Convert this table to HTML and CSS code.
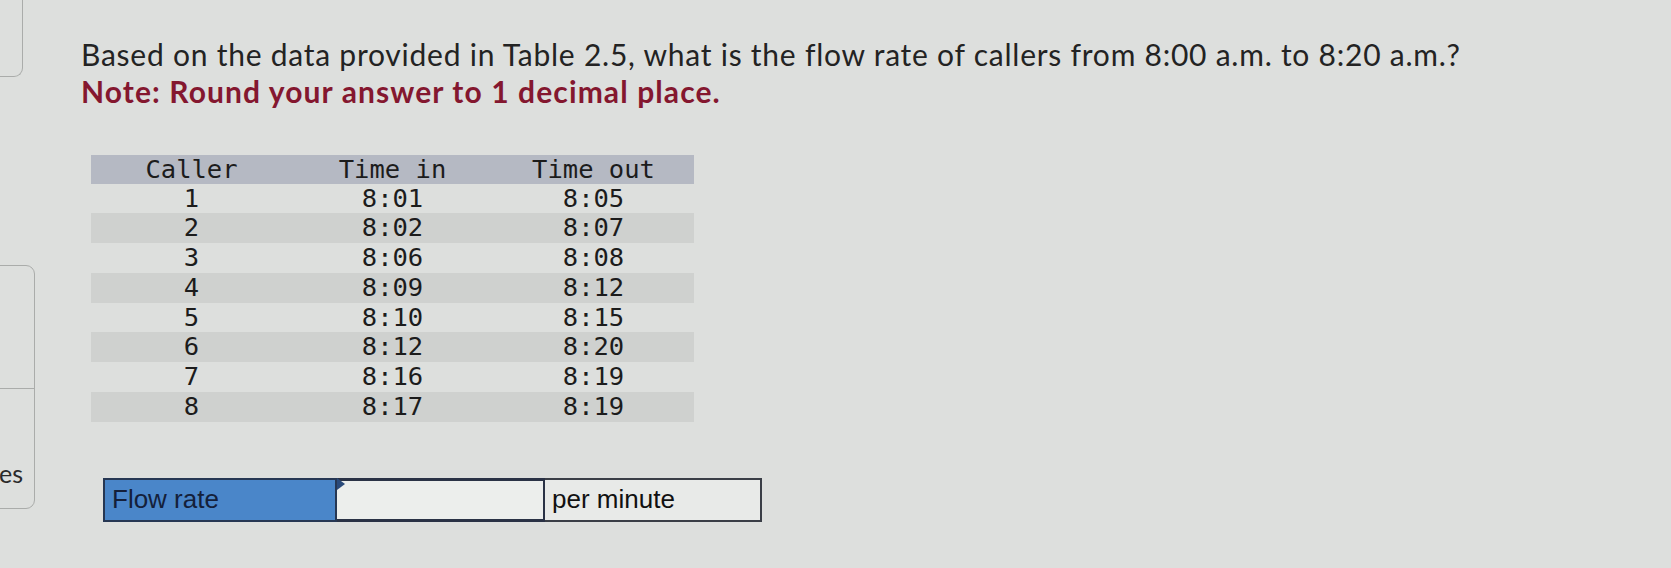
FILE: index.html
```html
<!DOCTYPE html>
<html lang="en">
<head>
<meta charset="utf-8">
<title>Flow rate question</title>
<link rel="stylesheet" href="styles.css">
</head>
<body>
<div class="page">
  <aside class="side">
    <div class="side-box top"></div>
    <div class="side-box lower">
      <div class="side-sec"></div>
      <div class="side-sec last"><span class="side-label">es</span></div>
    </div>
  </aside>
  <main class="main">
    <p class="question">Based on the data provided in Table 2.5, what is the flow rate of callers from 8:00 a.m. to 8:20 a.m.?<br><strong class="note">Note: Round your answer to 1 decimal place.</strong></p>
    <div class="data">
      <div class="row head"><span>Caller</span><span>Time in</span><span>Time out</span></div>
      <div class="row"><span>1</span><span>8:01</span><span>8:05</span></div>
      <div class="row alt"><span>2</span><span>8:02</span><span>8:07</span></div>
      <div class="row"><span>3</span><span>8:06</span><span>8:08</span></div>
      <div class="row alt"><span>4</span><span>8:09</span><span>8:12</span></div>
      <div class="row"><span>5</span><span>8:10</span><span>8:15</span></div>
      <div class="row alt"><span>6</span><span>8:12</span><span>8:20</span></div>
      <div class="row"><span>7</span><span>8:16</span><span>8:19</span></div>
      <div class="row alt"><span>8</span><span>8:17</span><span>8:19</span></div>
    </div>
    <div class="answer">
      <div class="cell label">Flow rate</div>
      <div class="cell input"><span class="marker"></span></div>
      <div class="cell unit">per minute</div>
    </div>
  </main>
</div>
</body>
</html>
```

FILE: styles.css
```css
html, body {
  margin: 0;
  padding: 0;
}
body {
  background: #dddfdd;
  width: 1671px;
  height: 568px;
  overflow: hidden;
}
.page {
  display: flex;
  align-items: flex-start;
}
.side {
  width: 36px;
  flex: none;
  display: flex;
  flex-direction: column;
}
.side-box {
  border: 1.5px solid #aaacaa;
  border-radius: 0 0 9px 0;
  margin-left: -10px;
  box-sizing: border-box;
}
.side-box.top {
  width: 33px;
  height: 77px;
  border-top: none;
}
.side-box.lower {
  width: 45px;
  height: 244px;
  margin-top: 188px;
  border-radius: 0 9px 9px 0;
  display: flex;
  flex-direction: column;
}
.side-sec {
  height: 122px;
  border-bottom: 1.5px solid #aaacaa;
}
.side-sec.last {
  flex: 1;
  border-bottom: none;
  display: flex;
  align-items: flex-end;
  padding-bottom: 22px;
  box-sizing: border-box;
}
.side-label {
  font-family: "Lato", "Open Sans", sans-serif;
  font-size: 25px;
  color: #2a2a2a;
  margin-left: 8px;
  line-height: 1;
}
.main {
  padding-left: 45px;
  padding-top: 36px;
}
.question {
  margin: 0;
  font-family: "Lato", "Open Sans", sans-serif;
  font-size: 30px;
  line-height: 37px;
  letter-spacing: 0.76px;
  color: #232323;
  white-space: nowrap;
}
.note {
  color: #84172f;
  font-weight: 700;
  letter-spacing: 1.1px;
}
.data {
  margin-top: 45px;
  margin-left: 10px;
  width: 603px;
  font-family: "DejaVu Sans Mono", "Liberation Mono", monospace;
  font-size: 25.5px;
  color: #1c1c1c;
}
.row {
  display: grid;
  grid-template-columns: 1fr 1fr 1fr;
  height: 29.8px;
  line-height: 29.8px;
  text-align: center;
}
.row.head {
  background: #b5b9c3;
  height: 28.5px;
  line-height: 28.5px;
}
.row.alt {
  background: #cfd1cf;
}
.answer {
  display: flex;
  margin-top: 56px;
  margin-left: 22px;
  height: 44px;
  font-family: "Liberation Sans", Arial, sans-serif;
  font-size: 26px;
  color: #14203a;
}
.cell {
  box-sizing: border-box;
  display: flex;
  align-items: center;
  height: 44px;
}
.cell.label {
  width: 234px;
  background: #4a86c9;
  border: 2px solid #263753;
  padding-left: 7px;
}
.cell.input {
  width: 208px;
  background: #eceeec;
  border-top: 3px solid #2a3245;
  border-bottom: 3px solid #2a3245;
  border-right: 2px solid #2a3245;
  position: relative;
}
.marker {
  position: absolute;
  left: 0;
  top: 0;
  width: 0;
  height: 0;
  border-top: 6px solid transparent;
  border-bottom: 6px solid transparent;
  border-left: 8px solid #2a4a7a;
  margin-top: -3px;
}
.cell.unit {
  width: 217px;
  background: #e8eae8;
  border: 2px solid #3a3e46;
  border-left: none;
  padding-left: 7px;
  color: #111;
}
```
